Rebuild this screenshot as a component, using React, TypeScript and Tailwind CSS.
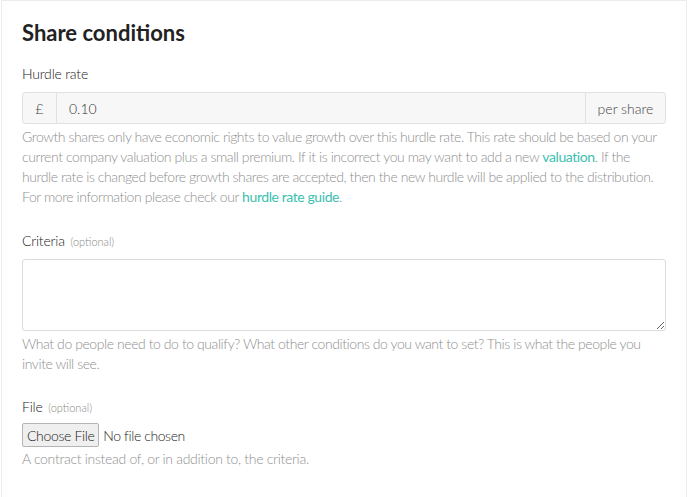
export default function App() {
  return (
    <div className="min-h-screen bg-white pl-px font-['Lato','Noto_Sans',sans-serif] font-light text-[#333]">
      <div className="w-[686px] min-h-[497px] border border-b-0 border-[#ececec] bg-white px-[20px] pt-[17px]">
        {/* Heading */}
        <h2 className="text-[22px] font-bold leading-[30px] text-[#222]">Share conditions</h2>

        {/* Hurdle rate */}
        <div className="mt-[16px]">
          <label className="block text-[14px] leading-[20px] tracking-[-0.2px] text-[#222]">Hurdle rate</label>
          <div className="mt-[8px] flex h-[32px] w-[644px] rounded-[3px] border border-[#e2e2e2] bg-[#f7f7f7] text-[14px] text-[#444]">
            <span className="flex w-[34px] shrink-0 items-center justify-center border-r border-[#e2e2e2]">£</span>
            <span className="flex flex-1 items-center pl-[12px] text-[#333]">0.10</span>
            <span className="flex w-[80px] shrink-0 items-center justify-center border-l border-[#e2e2e2]">per share</span>
          </div>
          <p className="mt-[3px] w-[646px] text-[14px] leading-[20px] tracking-[-0.42px] text-[#8f8f8f]">
            Growth shares only have economic rights to value growth over this hurdle rate. This rate should be based on your current company valuation plus a small premium. If it is incorrect you may want to add a new{" "}
            <a className="font-normal text-[#3cbfb0]">valuation</a>. If the hurdle rate is changed before growth shares are accepted, then the new hurdle will be applied to the distribution. For more information please check our{" "}
            <a className="font-normal text-[#3cbfb0]">hurdle rate guide</a>.
          </p>
        </div>

        {/* Criteria */}
        <div className="mt-[24px]">
          <label className="block text-[14px] leading-[20px] tracking-[-0.2px] text-[#222]">
            Criteria <span className="ml-[2px] text-[11px] tracking-normal text-[#888]">(optional)</span>
          </label>
          <textarea className="mt-[7px] block h-[72px] w-[644px] rounded-[3px] border border-[#dcdcdc] bg-white" />
          <p className="mt-[3px] w-[646px] text-[14px] leading-[20px] tracking-[-0.42px] text-[#8f8f8f]">
            What do people need to do to qualify? What other conditions do you want to set? This is what the people you invite will see.
          </p>
        </div>

        {/* File */}
        <div className="mt-[23px]">
          <label className="block text-[14px] leading-[20px] tracking-[-0.2px] text-[#222]">
            File <span className="ml-[2px] text-[11px] tracking-normal text-[#888]">(optional)</span>
          </label>
          <div className="mt-[5px] flex items-center text-[14px] text-[#222]">
            <span className="flex h-[24px] items-center rounded-[2px] border border-[#b4b4b4] bg-[#efefef] px-[4px] tracking-[-0.35px]">Choose File</span>
            <span className="ml-[4px] tracking-[-0.4px]">No file chosen</span>
          </div>
          <p className="mt-[2px] text-[14px] leading-[20px] tracking-[-0.3px] text-[#8f8f8f]">
            A contract instead of, or in addition to, the criteria.
          </p>
        </div>
      </div>
    </div>
  );
}
